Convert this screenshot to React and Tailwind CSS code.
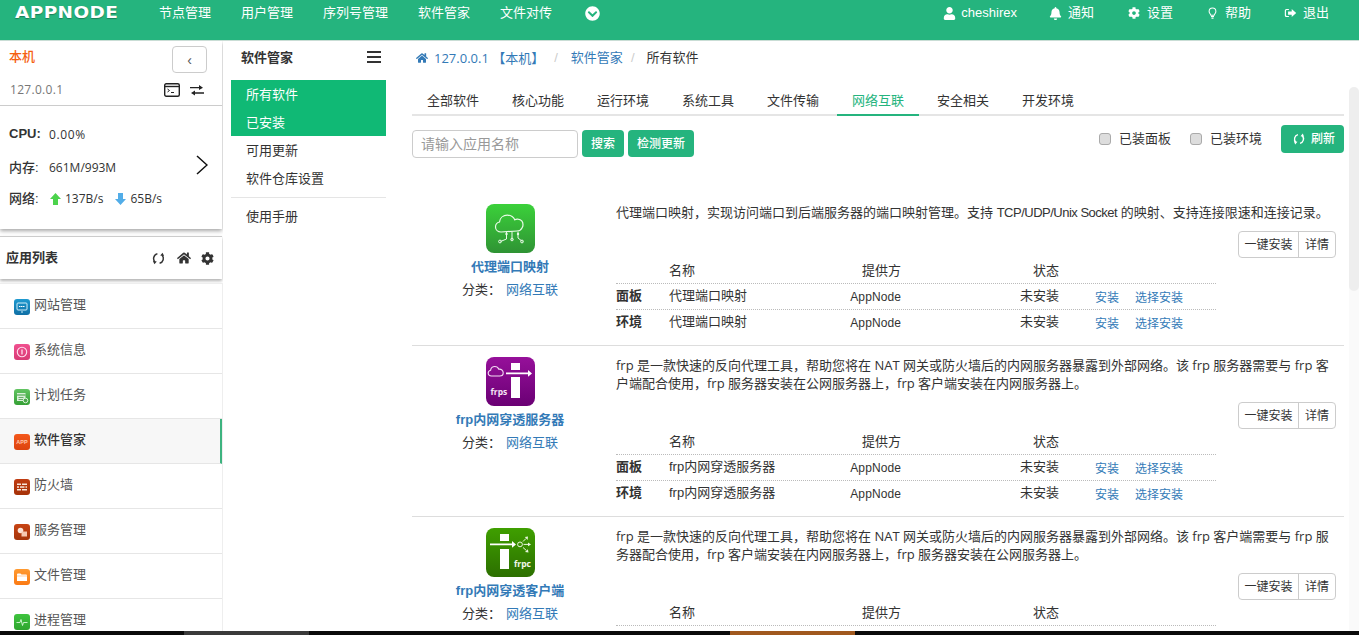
import React from "react";
import { FaHome, FaUser, FaBell, FaCog, FaChevronCircleDown } from "react-icons/fa";

const Refresh = ({ className }) => (
  <svg viewBox="0 0 14 14" className={className} fill="none" stroke="currentColor" strokeWidth="1.600">
    <path d="M5.800 1.900A5.300 5.300 0 0 0 3.300 10.800" />
    <path d="M8.200 12.100A5.300 5.300 0 0 0 10.700 3.200" />
    <path d="M1 9.700L5.200 10.100 2.600 13.300z" fill="currentColor" stroke="none" />
    <path d="M13 4.300L8.800 3.900 11.400 .7z" fill="currentColor" stroke="none" />
  </svg>
);

const Bulb = ({ className }) => (
  <svg viewBox="0 0 12 16" className={className} fill="none" stroke="currentColor" strokeWidth="1.4">
    <path d="M3.800 10.200C3.400 8.400 1.500 7.600 1.500 5.200a4.500 4.500 0 0 1 9 0c0 2.400-1.900 3.200-2.300 5z" />
    <path d="M4 12h4M4.600 14.200h2.800" strokeWidth="1.600" />
  </svg>
);

const Logout = ({ className }) => (
  <svg viewBox="0 0 16 14" className={className} fill="currentColor">
    <path d="M6 2H3a2 2 0 0 0-2 2v6a2 2 0 0 0 2 2h3v-1.400H3.400a1 1 0 0 1-1-1V4.400a1 1 0 0 1 1-1H6z" />
    <path d="M9.500 2.200L15 7l-5.500 4.800V9H5V5h4.500z" />
  </svg>
);

const MiniIcon = ({ from, to, children }) => (
  <svg viewBox="0 0 16 16" className="w-4 h-4 mt-[4px] shrink-0">
    <defs>
      <linearGradient id={"g" + from.slice(1)} x1="0" y1="0" x2="0" y2="1">
        <stop offset="0" stopColor={from} />
        <stop offset="1" stopColor={to} />
      </linearGradient>
    </defs>
    <rect width="16" height="16" rx="3" fill={`url(#g${from.slice(1)})`} />
    {children}
  </svg>
);

const apps = [
  ["网站管理", "#1f9ad0", "#0f6fa5", <g key="a"><rect x="3" y="4" width="10" height="7" rx="1" fill="none" stroke="#cfeefa" strokeWidth="1" /><path d="M5 7.500h6" stroke="#fff" strokeWidth="1" strokeDasharray="1.500 .5" /><path d="M7 13h2" stroke="#cfeefa" /></g>],
  ["系统信息", "#f0508f", "#d83a75", <g key="b"><circle cx="8" cy="8" r="4.700" fill="none" stroke="#fde" strokeWidth="1.100" /><path d="M8 5.500v5" stroke="#fde" strokeWidth="1.300" /></g>],
  ["计划任务", "#62c462", "#35a035", <g key="c"><rect x="3" y="4" width="8.500" height="8" fill="#d8f0d8" /><path d="M3 6h8.500" stroke="#3a9a3a" /><path d="M4.500 8.500h5M4.500 10.500h5" stroke="#6aa86a" /><circle cx="11.500" cy="11.500" r="2.300" fill="#4aa84a" stroke="#d8f0d8" /></g>],
  ["软件管家", "#f4581c", "#dc430e", <text key="d" x="8" y="10" textAnchor="middle" fontSize="5.500" fontWeight="700" fill="#ffc9ad" fontFamily="Liberation Sans, sans-serif">APP</text>],
  ["防火墙", "#c03c12", "#a53208", <g key="e" fill="#f8e6dc"><rect x="3" y="4.500" width="4" height="1.500" /><rect x="8" y="4.500" width="5" height="1.500" /><rect x="3" y="7.300" width="2" height="1.500" /><rect x="6" y="7.300" width="4.500" height="1.500" /><rect x="11.500" y="7.300" width="1.500" height="1.500" /><rect x="3" y="10" width="4" height="1.500" /><rect x="8" y="10" width="5" height="1.500" /></g>],
  ["服务管理", "#c84414", "#a5350c", <g key="f"><circle cx="6.500" cy="6.500" r="2.800" fill="#fbe4d8" /><rect x="7.500" y="7.500" width="5.500" height="5" fill="#f6c8b2" /></g>],
  ["文件管理", "#ff9a30", "#fb7a14", <g key="g"><path d="M3 5.500a1 1 0 0 1 1-1h2.500l1 1H12a1 1 0 0 1 1 1V12H3z" fill="#fff" /><path d="M3 7h10" stroke="#ffb066" strokeWidth=".6" /></g>],
  ["进程管理", "#3fc43f", "#2ea52e", <path key="h" d="M2.500 8.500h3.500l1-3 1.500 6 1-3h4" fill="none" stroke="#d8f8d8" strokeWidth=".9" />],
];

const BigIcon = ({ id, from, to, children }) => (
  <svg viewBox="0 0 49 49" className="w-[49px] h-[49px] block">
    <defs>
      <linearGradient id={id} x1="0" y1="0" x2="0" y2="1">
        <stop offset="0" stopColor={from} />
        <stop offset="1" stopColor={to} />
      </linearGradient>
    </defs>
    <rect width="49" height="49" rx="8" fill={`url(#${id})`} />
    {children}
  </svg>
);

const iconCloud = (
  <BigIcon id="bi1" from="#3bd13a" to="#2f9334">
    <g fill="none" stroke="#eafbe8" strokeWidth="1">
      <path d="M15 28c-3 0-5.500-2-5.500-5 0-2.500 1.800-4.500 4-5 .4-4 3.600-6.800 7.800-6.800 3.400 0 6.200 1.800 7.500 4.600 1-.6 2.200-.8 3.200-.6 3 .4 5 2.800 5 5.500 0 1.200-.3 2.300-1 3.200-1 2-3 3.100-5 3.100z" strokeWidth="1.200" />
      <path d="M20.500 28v7l-6 2.500M26 28v8M32 28v6l4.500 3.500" />
    </g>
    <g fill="none" stroke="#eafbe8" strokeWidth="1">
      <circle cx="14" cy="37.500" r="1.400" />
      <circle cx="26" cy="35.500" r="1.300" />
      <circle cx="36" cy="37.500" r="1.400" />
    </g>
    <circle cx="20.500" cy="30" r="1.200" fill="#eafbe8" />
    <circle cx="32" cy="30" r="1.200" fill="#eafbe8" />
  </BigIcon>
);

const iconFrps = (
  <BigIcon id="bi2" from="#96109a" to="#6a0074">
    <rect x="25" y="6" width="9" height="7" fill="#fff" />
    <rect x="25" y="20" width="9" height="21" fill="#fff" />
    <path d="M20 15.600h22V13l4 3.400-4 3.400v-2.500H20z" fill="#fff" />
    <path d="M5.500 19c-2 0-3.300-1.300-3.300-2.900 0-1.500 1-2.600 2.400-2.900.4-2.200 2-3.700 4.200-3.700 1.900 0 3.400 1.100 4 2.700 2.400-.4 4.400 1.300 4.400 3.500 0 1.900-1.500 3.300-3.400 3.300z" fill="none" stroke="#f3dcf3" strokeWidth="1.100" />
    <text x="4.500" y="38" fontSize="8.500" fontWeight="700" fill="#f6e6f6" fontFamily="Open Sans, sans-serif">frps</text>
  </BigIcon>
);

const iconFrpc = (
  <BigIcon id="bi3" from="#3f9f00" to="#2c6f00">
    <rect x="14" y="6" width="9" height="7" fill="#fff" />
    <rect x="14" y="21" width="9" height="20" fill="#fff" />
    <path d="M4 15.600h22V13l4 3.400-4 3.400v-2.500H4z" fill="#fff" />
    <circle cx="34" cy="16.400" r="2.400" fill="none" stroke="#eaf6df" strokeWidth="1" />
    <path d="M37 13.500l3-3M37.500 16.400h4.500M37 19.500l3.400 3" stroke="#eaf6df" strokeWidth="1" />
    <path d="M42 8.500l-.4 3.400-2.800-2.800zM45 16.400l-3 1.900v-3.800zM42.500 24.500l-3.500-.5 2.900-2.700z" fill="#eaf6df" />
    <text x="28" y="39" fontSize="8.500" fontWeight="700" fill="#f2f9ea" fontFamily="Open Sans, sans-serif">frpc</text>
  </BigIcon>
);

const num = "font-['Open_Sans','Noto_Sans_CJK_SC',sans-serif]";
const line = "leading-[17px] h-[18px] whitespace-nowrap";

const softwares = [
  {
    name: "代理端口映射",
    icon: iconCloud,
    desc: (
      <div className={line}>
        代理端口映射，实现访问端口到后端服务器的端口映射管理。支持 <span className="tracking-[-.5px]">TCP/UDP/Unix Socket</span> 的映射、支持连接限速和连接记录。
      </div>
    ),
  },
  {
    name: "frp内网穿透服务器",
    icon: iconFrps,
    desc: (
      <>
        <div className={`${line} ${num}`}>frp 是一款快速的反向代理工具，帮助您将在 NAT 网关或防火墙后的内网服务器暴露到外部网络。该 frp 服务器需要与 frp 客</div>
        <div className={`${line} ${num}`}>户端配合使用，frp 服务器安装在公网服务器上，frp 客户端安装在内网服务器上。</div>
      </>
    ),
  },
  {
    name: "frp内网穿透客户端",
    icon: iconFrpc,
    desc: (
      <>
        <div className={`${line} ${num}`}>frp 是一款快速的反向代理工具，帮助您将在 NAT 网关或防火墙后的内网服务器暴露到外部网络。该 frp 客户端需要与 frp 服</div>
        <div className={`${line} ${num}`}>务器配合使用，frp 客户端安装在内网服务器上，frp 服务器安装在公网服务器上。</div>
      </>
    ),
  },
];

const cols = "grid grid-cols-[53px_171px_61px_158px_157px] w-[600px] h-[26px] leading-[24px]";
const dotted = "border-b border-dotted border-[#bbb]";

const Row = ({ label, name, rule }) => (
  <div className={`${cols} ${rule ? dotted : ""}`}>
    <span className="font-bold">{label}</span>
    <span>{name}</span>
    <span className="text-right text-[12px] tracking-[.1px] pt-px">AppNode</span>
    <span className="text-right">未安装</span>
    <span className="pl-9 text-[12px] text-[#337ab7] flex gap-[16px] pt-[2px]">
      <span>安装</span>
      <span>选择安装</span>
    </span>
  </div>
);

const Software = ({ s }) => (
  <div className="flex border-b border-[#ddd] pt-[11px] pb-[9px]">
    <div className="w-[196px] shrink-0 flex flex-col items-center">
      {s.icon}
      <div className="mt-[4px] leading-5 font-bold text-[#337ab7]">{s.name}</div>
      <div className="mt-[3px] leading-5 flex">
        <span className="w-[44px]">分类：</span>
        <span className="text-[#337ab7]">网络互联</span>
      </div>
    </div>
    <div className="ml-[8px] flex-1">
      {s.desc}
      <div className="mt-[9px] flex justify-end pr-[8px]">
        <div className="flex h-[27px] border border-[#ccc] rounded-[4px] leading-[26px] bg-white text-[12px]">
          <span className="w-[60px] text-center border-r border-[#ccc]">一键安装</span>
          <span className="w-[36px] text-center">详情</span>
        </div>
      </div>
      <div className={`${cols} ${dotted} leading-[25px]`}>
        <span />
        <span>名称</span>
        <span className="text-right">提供方</span>
        <span className="text-right">状态</span>
        <span />
      </div>
      <Row label="面板" name={s.name} rule />
      <Row label="环境" name={s.name} />
    </div>
  </div>
);

const tabs = ["全部软件", "核心功能", "运行环境", "系统工具", "文件传输", "网络互联", "安全相关", "开发环境"];

export default function App() {
  return (
    <div className="w-[1359px] h-[635px] overflow-hidden flex flex-col bg-white text-[13px] text-[#333] font-['Liberation_Sans','Noto_Sans_CJK_SC',sans-serif]">
      {/* top bar */}
      <header className="h-[41px] shrink-0 bg-[#25b47e] border-b border-[#c9ddd5] flex text-white leading-5 pt-[3px]">
        <div className="w-[159px] shrink-0 pl-[15px]">
          <span className="inline-block origin-left [transform:scaleX(1.15)] text-[16px] font-bold tracking-[.4px] font-['DejaVu_Sans',sans-serif] [text-shadow:0_1px_1px_rgba(0,0,0,.3)]">APPNODE</span>
        </div>
        <nav className="flex gap-[30px]">
          <span>节点管理</span>
          <span>用户管理</span>
          <span>序列号管理</span>
          <span>软件管家</span>
          <span>文件对传</span>
        </nav>
        <FaChevronCircleDown className="ml-[33px] mt-[3px] w-[15px] h-[15px]" />
        <div className="ml-auto flex pr-[30px]">
          <span className="flex items-center h-5 gap-[5px]"><FaUser className="w-[13px] h-[13px]" />cheshirex</span>
          <span className="flex items-center h-5 gap-[6px] ml-[32px]"><FaBell className="w-[13px] h-[13px]" />通知</span>
          <span className="flex items-center h-5 gap-[7px] ml-[34px]"><FaCog className="w-[12px] h-[12px]" />设置</span>
          <span className="flex items-center h-5 gap-[8px] ml-[35px]"><Bulb className="w-[9px] h-[13px]" />帮助</span>
          <span className="flex items-center h-5 gap-[6px] ml-[33px]"><Logout className="w-[13px] h-[12px]" />退出</span>
        </div>
      </header>

      <div className="flex-1 flex min-h-0">
        {/* sidebar */}
        <aside className="w-[223px] shrink-0 flex flex-col overflow-hidden">
          <section className="h-[188px] w-[222px] shrink-0 shadow-[0_2px_4px_rgba(0,0,0,.35)] flex flex-col">
            <div className="h-[65px] shrink-0 border-b border-[#ccc]">
              <div className="flex justify-between pl-[9px] pr-[15px] pt-[5px]">
                <span className="leading-5 mt-px text-[#f5600f] font-medium">本机</span>
                <span className="w-[35px] h-[27px] border border-[#ccc] rounded-[4px] flex items-center justify-center text-[#555] text-[14px] leading-none">‹</span>
              </div>
              <div className="flex items-center h-5 mt-[7px] pl-[10px] text-[#777] text-[12px]">
                <span className={`${num} tracking-[.3px]`}>127.0.0.1</span>
                <svg viewBox="0 0 16 14" className="w-4 h-[14px] ml-[101px]" fill="none" stroke="#222">
                  <rect x=".7" y=".7" width="14.600" height="12.600" rx="1.500" strokeWidth="1.400" />
                  <path d="M.7 3.500h14.600" strokeWidth="1.400" />
                  <path d="M3.500 6l2 1.500-2 1.500M7 9.500h3" strokeWidth="1" />
                </svg>
                <svg viewBox="0 0 14 12" className="w-[14px] h-3 ml-[10px]" fill="#222">
                  <path d="M0 3h9V1l4 2.700L9 6V4.300H0zM14 8.300H5V6.500L1 9l4 2.500V9.700h9z" />
                </svg>
              </div>
            </div>
            <div className="flex-1 flex">
              <div className="pl-[9px] pt-[18px] flex-1">
                <div className="flex leading-5"><b className="w-[40px]">CPU:</b><span className={`${num} tracking-[.6px] text-[12px] pt-px`}>0.00%</span></div>
                <div className="flex leading-5 mt-[13px]"><b className="w-[40px] font-medium">内存:</b><span className={`${num} text-[12px]`}>661M/993M</span></div>
                <div className="flex leading-5 mt-[11px] items-center text-[12px]">
                  <b className="w-[41px] text-[13px] font-medium">网络:</b>
                  <svg viewBox="0 0 11 12" className="w-[11px] h-3"><path d="M5.500 0L11 6H8v6H3V6H0z" fill="#4cd34c" /></svg>
                  <span className={`${num} ml-[4px]`}>137B/s</span>
                  <svg viewBox="0 0 11 12" className="w-[11px] h-3 ml-[12px]"><path d="M5.500 12L11 6H8V0H3v6H0z" fill="#52ade8" /></svg>
                  <span className={`${num} ml-[4px]`}>65B/s</span>
                </div>
              </div>
              <svg viewBox="0 0 12 20" className="w-3 h-5 mt-[49px] mr-[14px]" fill="none" stroke="#111" strokeWidth="1.500">
                <path d="M1 1l10 9-10 9" />
              </svg>
            </div>
          </section>

          <section className="mt-[7px] h-[43px] w-[222px] shrink-0 border-t border-[#ccc] shadow-[0_2px_3px_rgba(0,0,0,.3)] flex items-center pl-[6px]">
            <b className="font-semibold">应用列表</b>
            <Refresh className="w-[13px] h-[13px] ml-[94px] text-[#333]" />
            <FaHome className="w-[14px] h-[14px] ml-[12px] text-[#333]" />
            <FaCog className="w-[13px] h-[13px] ml-[10px] text-[#333]" />
          </section>

          <ul className="mt-[4px] w-[223px] border-t border-r border-[#eee] flex-1 overflow-hidden">
            {apps.map(([name, from, to, glyph]) => {
              const active = name === "软件管家";
              return (
                <li
                  key={name}
                  className={`h-[45px] flex pl-[14px] pt-[11px] gap-[4px] leading-5 border-b border-[#e6e6e6] ${active ? "bg-[#f7f7f7] font-medium border-r-2 border-r-[#3db37f]" : "text-[#555]"}`}
                >
                  <MiniIcon from={from} to={to}>{glyph}</MiniIcon>
                  <span>{name}</span>
                </li>
              );
            })}
          </ul>
        </aside>

        {/* second column */}
        <nav className="w-[163px] shrink-0 pl-[8px]">
          <div className="h-[39px] flex items-start pt-[7px] pl-[10px] pr-[5px] leading-5 justify-between">
            <b className="font-semibold">软件管家</b>
            <svg viewBox="0 0 14 12" className="w-[14px] h-3 mt-[3px]" fill="#333">
              <rect width="14" height="2" /><rect y="5" width="14" height="2" /><rect y="10" width="14" height="2" />
            </svg>
          </div>
          <ul>
            <li className="h-7 leading-[29px] pl-[15px] bg-[#10b975] text-white">所有软件</li>
            <li className="h-7 leading-[29px] pl-[15px] bg-[#10b975] text-white">已安装</li>
            <li className="h-7 leading-[29px] pl-[15px]">可用更新</li>
            <li className="h-7 leading-[29px] pl-[15px]">软件仓库设置</li>
          </ul>
          <div className="mt-[5px] border-t border-[#e5e5e5] pt-[9px] pl-[15px] leading-5">使用手册</div>
        </nav>

        {/* main */}
        <main className="ml-[26px] w-[932px] shrink-0 overflow-hidden">
          <div className="mt-[7px] h-5 flex items-center leading-5">
            <FaHome className="ml-[4px] w-[12px] h-[12px] text-[#337ab7]" />
            <span className={`${num} ml-[6px] text-[#337ab7]`}>127.0.0.1 【本机】</span>
            <span className="ml-[10px] text-[#ccc]">/</span>
            <span className="ml-[13px] text-[#337ab7]">软件管家</span>
            <span className="ml-[8px] text-[#ccc]">/</span>
            <span className="ml-[12px]">所有软件</span>
          </div>

          <div className="mt-[23px] flex border-b-2 border-[#e5e5e5] h-[25px] pl-0">
            {tabs.map((t) => (
              <span
                key={t}
                className={`w-[82px] mr-[3px] text-center leading-5 h-[25px] ${t === "网络互联" ? "text-[#25b47e] border-b-2 border-[#25b47e]" : ""}`}
              >
                {t}
              </span>
            ))}
          </div>

          <div className="mt-[14px] flex h-[28px]">
            <div className="w-[166px] h-[28px] border border-[#ccc] rounded-[4px] pl-[8px] leading-[26px] text-[14px] text-[#999]">请输入应用名称</div>
            <button className="ml-[4px] w-[42px] h-[27px] rounded-[4px] bg-[#25b47e] text-white text-[12px] font-medium">搜索</button>
            <button className="ml-[4px] w-[66px] h-[27px] rounded-[4px] bg-[#25b47e] text-white text-[12px] font-medium">检测更新</button>
            <div className="ml-auto -mt-[5px] h-[28px] flex items-center">
              <span className="w-[12px] h-[12px] rounded-[3px] bg-[#ddd] border border-[#aaa]" />
              <span className="ml-[8px]">已装面板</span>
              <span className="ml-[19px] w-[12px] h-[12px] rounded-[3px] bg-[#ddd] border border-[#aaa]" />
              <span className="ml-[8px]">已装环境</span>
              <span className="ml-[19px] w-[63px] h-[28px] pl-[3px] rounded-[4px] bg-[#25b47e] text-white text-[12px] flex items-center justify-center gap-[6px] font-medium">
                <Refresh className="w-3 h-3" />
                刷新
              </span>
            </div>
          </div>

          <div className="mt-[35px]">
            {softwares.map((s) => (
              <Software key={s.name} s={s} />
            ))}
          </div>
        </main>

        {/* scrollbar */}
        <div className="ml-[5px] w-[10px] mt-[46px] bg-[#fafafa] rounded-t-[5px]">
          <div className="h-[204px] bg-[#eee] rounded-[5px]" />
        </div>
      </div>

      {/* taskbar strip */}
      <footer className="h-[4px] shrink-0 bg-[#0a0a0a] flex">
        <span className="ml-[184px] w-[125px] bg-[#3a3a3a]" />
        <span className="ml-[421px] w-[125px] bg-[#a0581e]" />
      </footer>
    </div>
  );
}
